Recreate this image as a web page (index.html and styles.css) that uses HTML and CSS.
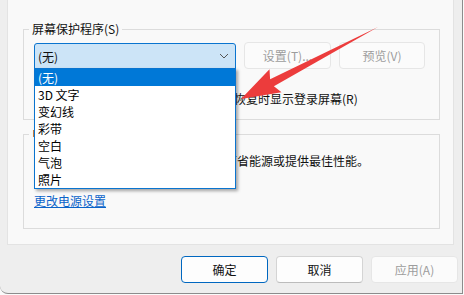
FILE: index.html
```html
<!DOCTYPE html>
<html lang="zh-CN">
<head>
<meta charset="utf-8">
<title>屏幕保护程序设置</title>
<link rel="stylesheet" href="styles.css">
</head>
<body>
<div class="window">
  <div class="panel">
    <div class="group g1">
      <div class="legend">屏幕保护程序(S)</div>
      <div class="row1">
        <div class="combo">
          <div class="combo-box">
            <span>(无)</span>
            <svg class="chev" width="10" height="6" viewBox="0 0 10 6"><path d="M1 1 L5 5 L9 1" fill="none" stroke="#555" stroke-width="1"/></svg>
          </div>
          <ul class="list">
            <li class="sel">(无)</li>
            <li>3D 文字</li>
            <li>变幻线</li>
            <li>彩带</li>
            <li>空白</li>
            <li>气泡</li>
            <li>照片</li>
          </ul>
        </div>
        <button class="btn dis w87">设置(T)...</button>
        <button class="btn dis w86">预览(V)</button>
      </div>
      <div class="row2">
        <div class="wait"><span>等待(W):</span><span class="spin">1</span><span>分钟</span></div>
        <span class="check"></span>
        <span>在恢复时显示登录屏幕(R)</span>
      </div>
    </div>
    <div class="group g2">
      <div class="legend">电源管理</div>
      <p class="desc">通过调整显示亮度和其他电源设置节省能源或提供最佳性能。</p>
      <a class="link" href="#">更改电源设置</a>
    </div>
  </div>
  <div class="footer">
    <button class="btn def">确定</button>
    <button class="btn">取消</button>
    <button class="btn dis">应用(A)</button>
  </div>
  <svg class="arrow" width="464" height="295" viewBox="0 0 464 295">
    <polygon points="378,27 273.9,86.2 281.5,92.3 241,99 269.5,69.3 270.1,79.2" fill="#ec3c3c"/>
  </svg>
</div>
</body>
</html>
```
FILE: styles.css
```css
html, body {
  margin: 0;
  padding: 0;
  background: #fafafa;
}
body {
  font-family: "Noto Sans CJK SC", "Noto Sans", sans-serif;
  font-size: 12px;
  color: #111111;
}
.window {
  position: relative;
  width: 455px;
  height: 293px;
  background: #eeeeee;
  border-right: 1px solid #8c8c8c;
  border-bottom: 1px solid #8c8c8c;
  border-bottom-left-radius: 8px;
  padding-left: 7px;
  box-sizing: content-box;
  overflow: hidden;
}
.panel {
  width: 445px;
  background: #f9f9f9;
  border: 1px solid #e3e3e3;
  border-top: none;
  padding: 29px 0 15px 0;
  display: flex;
  flex-direction: column;
}
.group {
  margin: 0 13px 0 15px;
  border: 1px solid #dcdcdc;
  display: flex;
  flex-direction: column;
  align-items: flex-start;
}
.g1 { padding: 0 0 11px 10px; }
.g2 { margin-top: 14px; padding: 0 0 18px 10px; }
.legend {
  margin: -9px 0 0 -5px;
  padding: 0 3px;
  height: 16px;
  line-height: 16px;
  background: #f9f9f9;
  white-space: nowrap;
}
.row1 {
  margin-top: 5px;
  display: flex;
  align-items: flex-start;
  gap: 8px;
}
.combo {
  position: relative;
  margin-top: 1px;
}
.combo-box {
  width: 202px;
  height: 26px;
  box-sizing: border-box;
  border: 1px solid #0a74cf;
  border-radius: 3px 3px 0 0;
  background: #cce4f7;
  display: flex;
  align-items: center;
  justify-content: space-between;
  padding: 0 6px 0 3px;
}
.chev { display: block; }
.list {
  position: absolute;
  left: 0;
  top: 25px;
  width: 202px;
  box-sizing: border-box;
  margin: 0;
  padding: 0;
  list-style: none;
  background: #ffffff;
  border: 1px solid #0a74cf;
  box-shadow: 2px 2px 3px rgba(0, 0, 0, 0.35);
  z-index: 2;
}
.list li {
  height: 17px;
  line-height: 17px;
  padding-left: 3px;
  color: #000;
}
.list li.sel {
  background: #0078d7;
  color: #fff;
}
.btn {
  font: inherit;
  height: 27px;
  width: 87px;
  box-sizing: border-box;
  border: 1px solid #d4d4d4;
  border-bottom-color: #bcbcbc;
  border-radius: 4px;
  background: #fdfdfd;
  color: #111111;
  padding: 0;
}
.btn.w86 { width: 86px; }
.btn.dis {
  background: #fbfbfb;
  border-color: #e6e6e6;
  color: #9d9d9d;
}
.btn.def {
  border: 1px solid #0067c0;
}
.row2 {
  margin-top: 19px;
  height: 20px;
  display: flex;
  align-items: center;
  white-space: nowrap;
}
.wait {
  width: 160px;
  display: flex;
  align-items: center;
  gap: 4px;
}
.spin {
  width: 50px;
  height: 18px;
  border: 1px solid #ccc;
  background: #fff;
  line-height: 18px;
  padding-left: 3px;
}
.check {
  width: 13px;
  height: 13px;
  box-sizing: border-box;
  border: 1px solid #555;
  border-radius: 3px;
  background: #fff;
  margin: 0 5px 0 10px;
}
.desc {
  margin: 10px 0 0 11px;
  line-height: 18px;
  white-space: nowrap;
}
.link {
  margin-top: 22px;
  line-height: 18px;
  color: #0a63c9;
  text-decoration: underline;
}
.footer {
  display: flex;
  justify-content: flex-end;
  gap: 8px;
  padding: 11px 4px 0 0;
}
.arrow {
  position: absolute;
  left: 0;
  top: 0;
  pointer-events: none;
  z-index: 3;
}
```
